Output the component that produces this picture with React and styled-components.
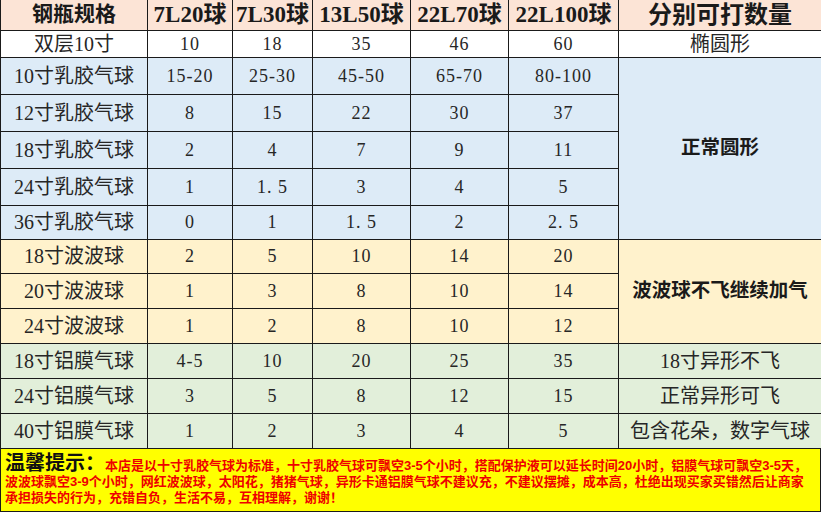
import React from "react";
import styled, { createGlobalStyle } from "styled-components";

const Global = createGlobalStyle`
  html, body { margin: 0; padding: 0; background: #fff; }
  body { width: 821px; height: 512px; overflow: hidden; }
`;

const Page = styled.div`
  width: 821px;
  height: 512px;
  display: flex;
  flex-direction: column;
  font-family: "Liberation Serif", "Noto Sans CJK SC", serif;
  color: #262626;
`;

const Table = styled.table`
  width: 821px;
  border-collapse: collapse;
  table-layout: fixed;
`;

const Row = styled.tr`
  height: ${(p) => p.$h}px;
`;

const bgs = {
  head: "#fce4d6",
  white: "#ffffff",
  blue: "#ddebf7",
  gold: "#fff2cc",
  green: "#e2efda",
};

const Cell = styled.td`
  border: 1px solid #1a1a1a;
  padding: 0;
  text-align: center;
  vertical-align: middle;
  white-space: nowrap;
  background: ${(p) => bgs[p.$bg] || "#fff"};
  font-size: ${(p) => p.$size || 18}px;
  font-weight: ${(p) => (p.$bold ? 700 : 400)};
  color: ${(p) => (p.$bold ? "#1a1a1a" : "#262626")};
  letter-spacing: ${(p) => (p.$num ? "1px" : "0")};
  line-height: 1;
`;

const HeadCell = styled.th`
  border: 1px solid #1a1a1a;
  border-top: none;
  padding: 0;
  text-align: center;
  vertical-align: middle;
  white-space: nowrap;
  background: ${bgs.head};
  font-size: ${(p) => p.$size || 23}px;
  font-weight: 700;
  color: #1a1a1a;
  line-height: 1;
`;

const Notice = styled.div`
  flex: 1;
  background: #ffff00;
  border: 1px solid #1a1a1a;
  border-top: none;
  padding: 3px 4px 0 4px;
  font-family: "Liberation Sans", "Noto Sans CJK SC", sans-serif;
  font-weight: 700;
  color: #ee0000;
  font-size: 13px;
  white-space: nowrap;
`;

const FirstLine = styled.div`
  height: 22px;
  display: flex;
  align-items: baseline;
  line-height: 22px;
`;

const Title = styled.span`
  font-family: "Liberation Serif", "Noto Sans CJK SC", serif;
  font-size: 20px;
  font-weight: 700;
  color: #111;
  margin-right: 0;
`;

const Line = styled.div`
  height: 16px;
  line-height: 16px;
`;

const cols = [147, 85, 80, 98, 98, 110, 203];

const data = [
  { bg: "blue", h: 37, name: "10寸乳胶气球", v: ["15-20", "25-30", "45-50", "65-70", "80-100"] },
  { bg: "blue", h: 37, name: "12寸乳胶气球", v: ["8", "15", "22", "30", "37"] },
  { bg: "blue", h: 37, name: "18寸乳胶气球", v: ["2", "4", "7", "9", "11"] },
  { bg: "blue", h: 37, name: "24寸乳胶气球", v: ["1", "1.5", "3", "4", "5"] },
  { bg: "blue", h: 34, name: "36寸乳胶气球", v: ["0", "1", "1.5", "2", "2.5"] },
  { bg: "gold", h: 34, name: "18寸波波球", v: ["2", "5", "10", "14", "20"] },
  { bg: "gold", h: 35, name: "20寸波波球", v: ["1", "3", "8", "10", "14"] },
  { bg: "gold", h: 35, name: "24寸波波球", v: ["1", "2", "8", "10", "12"] },
  { bg: "green", h: 35, name: "18寸铝膜气球", v: ["4-5", "10", "20", "25", "35"] },
  { bg: "green", h: 35, name: "24寸铝膜气球", v: ["3", "5", "8", "12", "15"] },
  { bg: "green", h: 35, name: "40寸铝膜气球", v: ["1", "2", "3", "4", "5"] },
];

const side = {
  0: { span: 5, text: "正常圆形", bold: true, size: 19.5 },
  5: { span: 3, text: "波波球不飞继续加气", bold: true, size: 19.5 },
  8: { span: 1, text: "18寸异形不飞", size: 20 },
  9: { span: 1, text: "正常异形可飞", size: 20 },
  10: { span: 1, text: "包含花朵，数字气球", size: 20 },
};

const fmt = (s) => s.replace(".", ". ");

export default function App() {
  return (
    <>
      <Global />
      <Page>
        <Table>
          <colgroup>
            {cols.map((w, i) => (
              <col key={i} style={{ width: w }} />
            ))}
          </colgroup>
          <thead>
            <Row $h={30}>
              <HeadCell $size={21}>钢瓶规格</HeadCell>
              <HeadCell>7L20球</HeadCell>
              <HeadCell>7L30球</HeadCell>
              <HeadCell>13L50球</HeadCell>
              <HeadCell>22L70球</HeadCell>
              <HeadCell>22L100球</HeadCell>
              <HeadCell $size={24}>分别可打数量</HeadCell>
            </Row>
          </thead>
          <tbody>
            <Row $h={27}>
              <Cell $bg="white" $size={20}>双层10寸</Cell>
              {["10", "18", "35", "46", "60"].map((v) => (
                <Cell key={v} $bg="white" $num>{v}</Cell>
              ))}
              <Cell $bg="white" $size={20}>椭圆形</Cell>
            </Row>
            {data.map((r, i) => (
              <Row key={r.name} $h={r.h}>
                <Cell $bg={r.bg} $size={20}>{r.name}</Cell>
                {r.v.map((v, j) => (
                  <Cell key={j} $bg={r.bg} $num>{fmt(v)}</Cell>
                ))}
                {side[i] && (
                  <Cell
                    $bg={r.bg}
                    rowSpan={side[i].span}
                    $bold={side[i].bold}
                    $size={side[i].size}
                  >
                    {side[i].text}
                  </Cell>
                )}
              </Row>
            ))}
          </tbody>
        </Table>
        <Notice>
          <FirstLine>
            <Title>温馨提示：</Title>
            <span>本店是以十寸乳胶气球为标准，十寸乳胶气球可飘空3-5个小时，搭配保护液可以延长时间20小时，铝膜气球可飘空3-5天，</span>
          </FirstLine>
          <Line>波波球飘空3-9个小时，网红波波球，太阳花，猪猪气球，异形卡通铝膜气球不建议充，不建议摆摊，成本高，杜绝出现买家买错然后让商家</Line>
          <Line>承担损失的行为，充错自负，生活不易，互相理解，谢谢！</Line>
        </Notice>
      </Page>
    </>
  );
}
